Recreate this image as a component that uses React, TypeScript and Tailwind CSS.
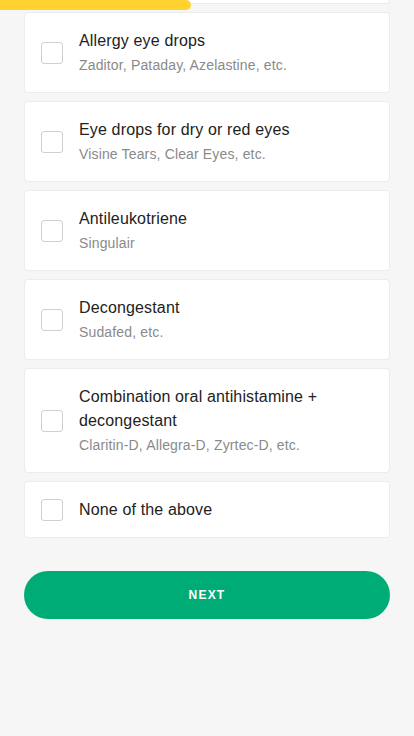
import React from "react";

const items = [
  { title: "Allergy eye drops", sub: "Zaditor, Pataday, Azelastine, etc." },
  { title: "Eye drops for dry or red eyes", sub: "Visine Tears, Clear Eyes, etc." },
  { title: "Antileukotriene", sub: "Singulair" },
  { title: "Decongestant", sub: "Sudafed, etc." },
  { title: "Combination oral antihistamine + decongestant", sub: "Claritin-D, Allegra-D, Zyrtec-D, etc." },
  { title: "None of the above", sub: "" },
];

export default function App() {
  return (
    <div
      className="relative min-h-[736px] w-full bg-[#f6f6f6]"
      style={{ fontFamily: '"Liberation Sans", Arial, sans-serif' }}
    >
      <div className="absolute left-0 top-0 h-[10px] w-[191px] rounded-r-full bg-[#ffd22f]" />
      <div className="px-6">
        <div className="h-[4px] rounded-b-[4px] border-x border-b border-[#ececec] bg-white" />
        <div className="mt-2 flex flex-col gap-2">
          {items.map((it) => (
            <label
              key={it.title}
              className={
                it.sub
                  ? "flex items-center gap-4 rounded-[4px] border border-[#ececec] bg-white px-4 py-4"
                  : "flex items-center gap-4 rounded-[4px] border border-[#ececec] bg-white px-4 pb-[15px] pt-4"
              }
            >
              <span className="h-[22px] w-[22px] shrink-0 rounded-[3px] border border-[#cfcfcf] bg-white" />
              <span className="flex flex-col pr-6">
                <span className="text-[16px] leading-6 tracking-[0.15px] text-[#222]">{it.title}</span>
                {it.sub && (
                  <span className="mt-[2px] text-[14px] leading-[21px] tracking-[0.15px] text-[#8a8a8a]">{it.sub}</span>
                )}
              </span>
            </label>
          ))}
        </div>
        <button className="mt-[33px] flex h-[48px] w-full items-center justify-center rounded-full bg-[#00ac76] text-[12px] font-bold tracking-[0.1em] text-white">
          NEXT
        </button>
      </div>
    </div>
  );
}
